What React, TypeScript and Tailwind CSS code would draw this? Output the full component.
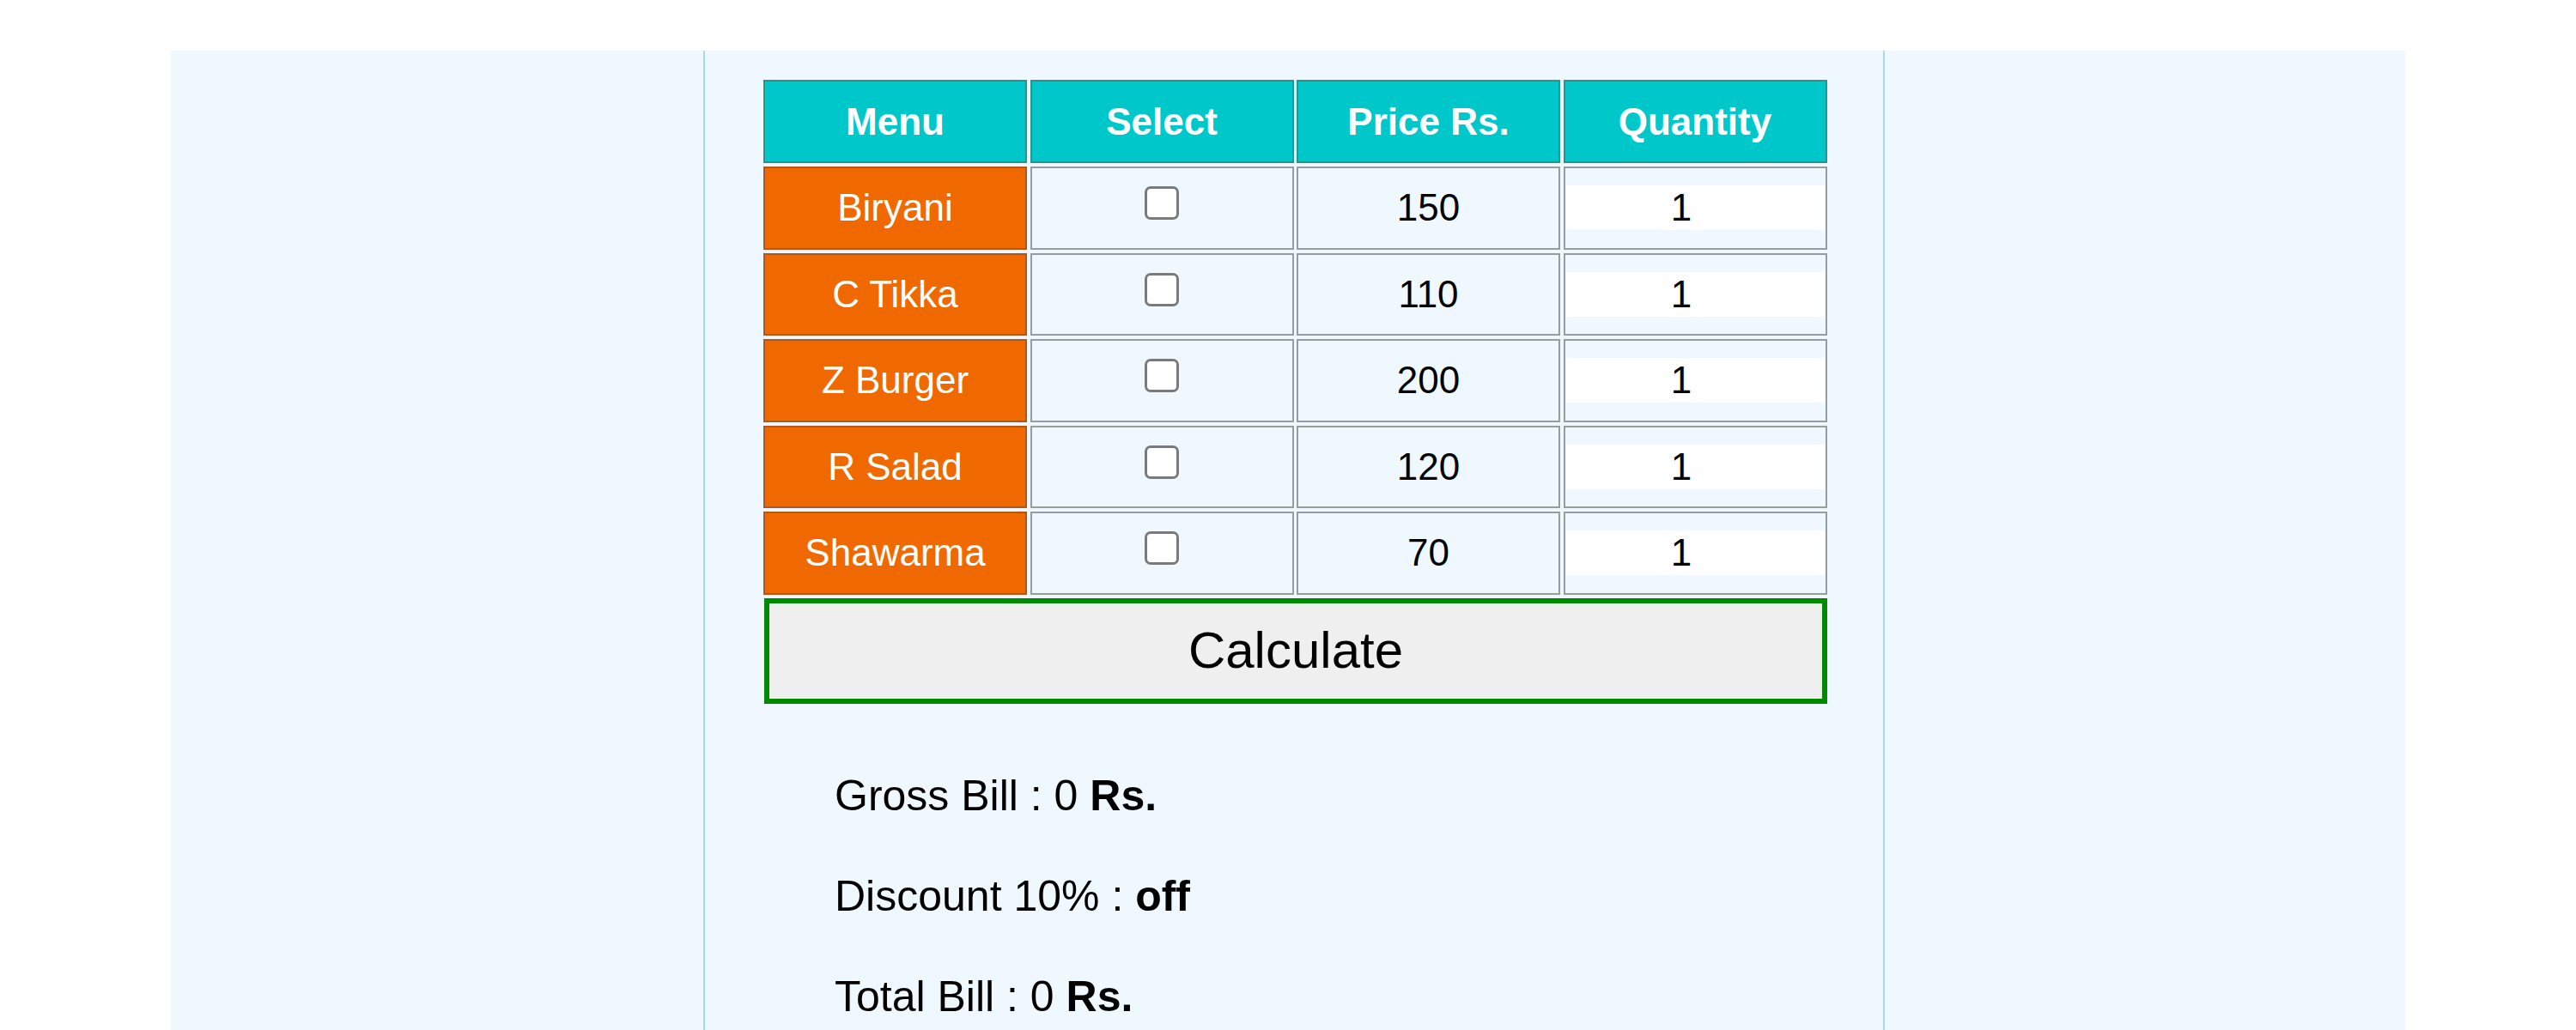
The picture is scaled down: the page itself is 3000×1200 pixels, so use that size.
import React, { useState } from 'react';

interface Item {
  name: string;
  price: number;
}

const items: Item[] = [
  { name: 'Biryani', price: 150 },
  { name: 'C Tikka', price: 110 },
  { name: 'Z Burger', price: 200 },
  { name: 'R Salad', price: 120 },
  { name: 'Shawarma', price: 70 },
];

const headers = ['Menu', 'Select', 'Price Rs.', 'Quantity'];

const App: React.FC = () => {
  const [checked, setChecked] = useState<boolean[]>(items.map(() => false));
  const [qty, setQty] = useState<string[]>(items.map(() => '1'));
  const [gross, setGross] = useState(0);

  // Sum selected rows
  const calculate = () => {
    let sum = 0;
    items.forEach((item, i) => {
      if (checked[i]) sum += item.price * (parseInt(qty[i]) || 0);
    });
    setGross(sum);
  };

  const discountOn = gross > 1000;
  const total = discountOn ? gross * 0.9 : gross;

  return (
    <div className="w-[3000px] h-[1200px] bg-white pt-[59px] overflow-hidden font-['Liberation_Sans',Arial,sans-serif]">
      <div className="ml-[199px] w-[2602px] h-[1141px] bg-[#f0f8ff]">
        <div className="ml-[620px] w-[1376px] h-full border-x-2 border-[#add8e6] pt-[34px]">
          <div className="ml-[68px] w-[1240px]">
            <div className="grid grid-cols-[307px_307px_307px_307px] gap-x-[3.5px] gap-y-[4px]">
              {headers.map((h) => (
                <div
                  key={h}
                  className="h-[97px] flex items-center justify-center bg-[#00c8ca] border-2 border-[#1f9893] text-white font-bold text-[44px]"
                >
                  {h}
                </div>
              ))}
              {items.map((item, i) => (
                <React.Fragment key={item.name}>
                  <div className="h-[96.5px] flex items-center justify-center bg-[#f06900] border-2 border-[#b3561a] text-white text-[44px]">
                    {item.name}
                  </div>
                  <div className="h-[96.5px] flex justify-center items-start pt-[21px] bg-[#f0f8ff] border-2 border-[#929f9c]">
                    <input
                      type="checkbox"
                      checked={checked[i]}
                      onChange={() =>
                        setChecked(checked.map((c, j) => (j === i ? !c : c)))
                      }
                      className="appearance-none w-[40px] h-[39px] bg-white border-[3px] border-[#7a7a7a] rounded-[7px] checked:bg-[#0075ff] checked:border-[#0075ff]"
                    />
                  </div>
                  <div className="h-[96.5px] flex items-center justify-center bg-[#f0f8ff] border-2 border-[#929f9c] text-black text-[44px]">
                    {item.price}
                  </div>
                  <div className="h-[96.5px] flex items-center bg-[#f0f8ff] border-2 border-[#929f9c]">
                    <input
                      type="text"
                      value={qty[i]}
                      onChange={(e) =>
                        setQty(qty.map((q, j) => (j === i ? e.target.value : q)))
                      }
                      className="w-[301px] h-[52px] ml-[1px] pr-[32px] bg-white text-center text-black text-[44px] outline-none"
                    />
                  </div>
                </React.Fragment>
              ))}
            </div>
            <button
              onClick={calculate}
              className="mt-[4px] ml-[1px] w-[1238px] h-[123px] bg-[#efefef] border-[6px] border-[#008a00] text-black text-[60px]"
            >
              Calculate
            </button>
          </div>
          <div className="ml-[151px] mt-[74px] flex flex-col gap-[50px] text-black text-[50px] leading-[67px]">
            <p>
              Gross Bill : {gross} <b>Rs.</b>
            </p>
            <p>
              Discount 10% : <b>{discountOn ? 'on' : 'off'}</b>
            </p>
            <p>
              Total Bill : {total} <b>Rs.</b>
            </p>
          </div>
        </div>
      </div>
    </div>
  );
};

export default App;
